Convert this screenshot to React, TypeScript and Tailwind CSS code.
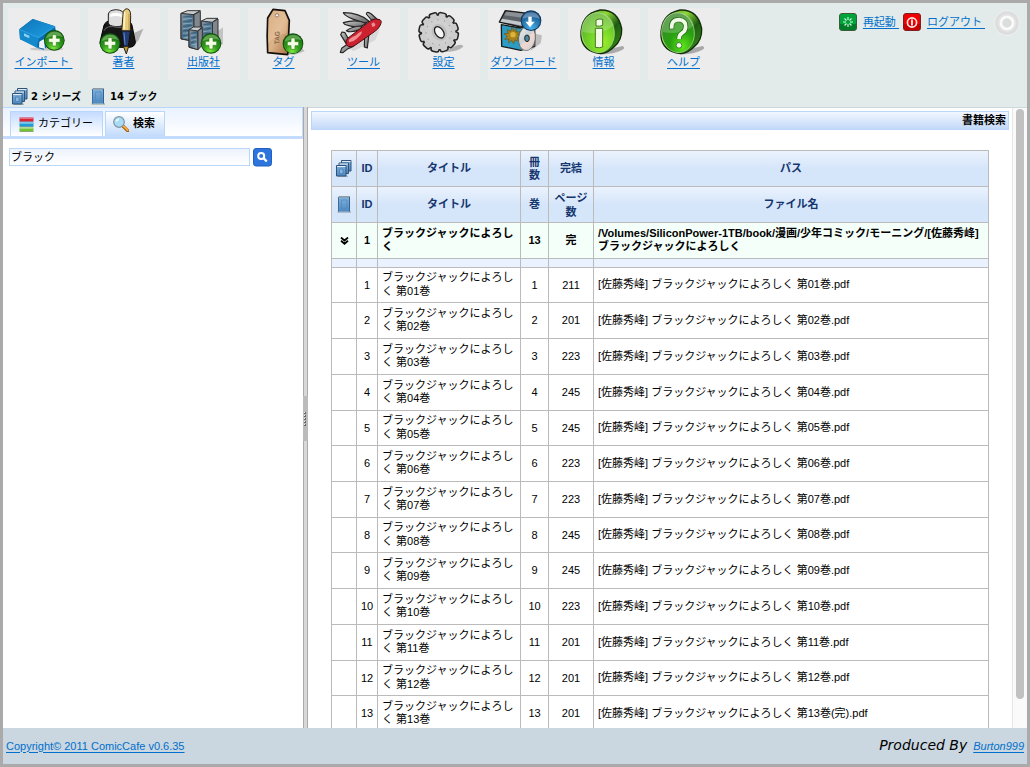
import React from "react";

type IconProps = { className?: string };

function Plus({ x, y }: { x: number; y: number }) {
  return (
    <g transform={`translate(${x} ${y})`}>
      <circle r="31" fill="#0c4a0c" />
      <circle r="28.500" fill="url(#gPlus)" />
      <path d="M-25 -6a26 24 0 0 1 50 -4c-14-6-34-4-50 4z" fill="#d8f5b8" opacity=".35" />
      <path d="M-6-17h12v11h11v12h-11v11h-12v-11h-11v-12h11z" fill="#f4fbe6" stroke="#2e8a1a" strokeWidth="2" />
    </g>
  );
}

function Defs() {
  return (
    <svg className="absolute h-0 w-0">
      <defs>
        <radialGradient id="gPlus" cx=".45" cy=".9" r=".85">
          <stop offset="0" stopColor="#7be83a" />
          <stop offset=".45" stopColor="#2f9a1c" />
          <stop offset="1" stopColor="#1a6e14" />
        </radialGradient>
        <radialGradient id="gInfo" cx=".6" cy=".75" r=".75">
          <stop offset="0" stopColor="#a0f02c" />
          <stop offset=".5" stopColor="#74d428" />
          <stop offset="1" stopColor="#5cb02a" />
        </radialGradient>
        <radialGradient id="gHelp" cx=".6" cy=".85" r=".8">
          <stop offset="0" stopColor="#5ee61a" />
          <stop offset=".5" stopColor="#28a010" />
          <stop offset="1" stopColor="#3c8a2c" />
        </radialGradient>
        <linearGradient id="gRim" x1="0" y1="0" x2="1" y2="1">
          <stop offset="0" stopColor="#2e7d16" />
          <stop offset=".35" stopColor="#8ed838" />
          <stop offset=".6" stopColor="#1d5c10" />
          <stop offset="1" stopColor="#3f9a1c" />
        </linearGradient>
        <linearGradient id="gBook" x1="0" y1="0" x2="1" y2="1">
          <stop offset="0" stopColor="#0f74b8" />
          <stop offset="1" stopColor="#1e9fe4" />
        </linearGradient>
        <linearGradient id="gTag" x1="0" y1="0" x2="1" y2="1">
          <stop offset="0" stopColor="#c89a70" />
          <stop offset=".5" stopColor="#dcb48c" />
          <stop offset="1" stopColor="#a8713e" />
        </linearGradient>
        <linearGradient id="gSteel" x1="0" y1="0" x2="1" y2="1">
          <stop offset="0" stopColor="#d0d0d0" />
          <stop offset="1" stopColor="#5c5c5c" />
        </linearGradient>
        <linearGradient id="gGlass" x1="0" y1="0" x2="1" y2="1">
          <stop offset="0" stopColor="#8a98a4" />
          <stop offset=".5" stopColor="#4c6c84" />
          <stop offset="1" stopColor="#9dbccc" />
        </linearGradient>
        <linearGradient id="gVol" x1="0" y1="0" x2="0" y2="1">
          <stop offset="0" stopColor="#7fb0dc" />
          <stop offset="1" stopColor="#4c88c0" />
        </linearGradient>
        <linearGradient id="gDisc" x1="0" y1="0" x2="1" y2="1">
          <stop offset="0" stopColor="#f4f4f4" />
          <stop offset=".45" stopColor="#c8d0d4" />
          <stop offset=".55" stopColor="#f0d8d0" />
          <stop offset="1" stopColor="#d0d0d0" />
        </linearGradient>
        <radialGradient id="gDown" cx=".5" cy=".9" r=".8">
          <stop offset="0" stopColor="#45b4ee" />
          <stop offset="1" stopColor="#174f86" />
        </radialGradient>
      </defs>
    </svg>
  );
}

const tileSvg = "block h-[48px] w-[72px] shrink-0";

function ImportIcon() {
  return (
    <svg className={tileSvg} viewBox="24 24 216 144">
      <ellipse cx="140" cy="147" rx="50" ry="5" fill="#888" opacity=".35" />
      <path d="M58 88l40-31 67 22 6 32-38 37-13-3-60-27z" fill="#0a6cac" />
      <path d="M58 88l40-31 67 22-49 36z" fill="url(#gBook)" />
      <path d="M58 88l58 26-3 31-53-28z" fill="#1489cb" />
      <path d="M118 124l14-6 3 29-18-4z" fill="#eef2f6" />
      <path d="M58 88l58 25 50-34" fill="none" stroke="#3fb2ef" strokeWidth="2" />
      <path d="M72 100l16 7v8l-16-7z" fill="#8bd2f6" />
      <path d="M124 120q-14 4-10 23l18 5" fill="none" stroke="#096cac" strokeWidth="3" />
      <Plus x={163} y={121} />
    </svg>
  );
}

function AuthorIcon() {
  return (
    <svg className={tileSvg} viewBox="264 24 216 144">
      <path d="M400 100l30-14-14 34-18 20z" fill="#777" opacity=".5" />
      <path d="M312 76q5-14 22-14h44q14 0 18 14l10 50q-1 16-20 16h-64q-23-1-22-16z" fill="#161616" stroke="#000" strokeWidth="3" />
      <path d="M325 42q2-12 24-13 22 2 22 14v28q-2 9-22 9-24-2-24-12z" fill="#dedede" stroke="#222" strokeWidth="3" />
      <path d="M331 43q14-8 34 0v8q-16-6-34 0z" fill="#fff" />
      <path d="M312 92q8-18 40-10 30 0 42 8" fill="none" stroke="#666" strokeWidth="3" />
      <path d="M370 34q7-12 17-5 5 6 5 18l-1 46h-26z" fill="#e9cb80" stroke="#2a2416" strokeWidth="3" />
      <path d="M374 36l-2 52" stroke="#fff4bc" strokeWidth="5" />
      <path d="M387 42v48" stroke="#9e7628" strokeWidth="2" />
      <path d="M365 93h26l-6 46h-14z" fill="#223c76" stroke="#111" strokeWidth="3" />
      <path d="M372 98l3 36" stroke="#6689c8" strokeWidth="3" />
      <path d="M370 139h16l-7 23z" fill="#c09a2c" stroke="#222" strokeWidth="3" />
      <Plus x={330} y={130} />
    </svg>
  );
}

function Building({ x, y, w, h }: { x: number; y: number; w: number; h: number }) {
  const s = w * 0.33;
  const rows = Array.from({ length: Math.floor((h - 22) / 7) }, (_, i) => i);
  return (
    <g transform={`translate(${x} ${y})`} stroke="#333" strokeWidth="3" strokeLinejoin="round">
      <path d={`M0 8L${s} 0H${w}L${w - s} 11V${h}L0 ${h - 7}z`} fill="#c7ccd0" />
      <path d={`M0 8L${w - s} 12V${h}L0 ${h - 8}z`} fill="url(#gGlass)" />
      <path d={`M${w - s} 12L${w} 2V${h - 14}L${w - s} ${h}z`} fill="#80888e" />
      {rows.map((i) => (
        <path key={i} d={`M6 ${19 + i * 7}L${w - s - 5} ${16 + i * 7}`} stroke={i % 2 ? "#86b4d0" : "#2f5a7c"} strokeWidth="2.500" />
      ))}
    </g>
  );
}

function PublisherIcon() {
  return (
    <svg className={tileSvg} viewBox="504 24 216 144">
      <path d="M645 100l24-18v50l-24 14z" fill="#888" opacity=".4" />
      <Building x={543} y={32} w={58} h={92} />
      <Building x={604} y={55} w={50} h={80} />
      <Building x={567} y={81} w={40} h={68} />
      <Plus x={633} y={130} />
    </svg>
  );
}

function TagIcon() {
  return (
    <svg className={tileSvg} viewBox="24 24 216 144">
      <path d="M150 150l34-8 10 12-30 10-70-2z" fill="#777" opacity=".4" />
      <path d="M99 28l36 4 13 29-5 103-60-6q-3-50 0-104z" fill="url(#gTag)" stroke="#14100c" strokeWidth="5" strokeLinejoin="round" />
      <path d="M101 32l31 4 11 26-4 38q-30 4-54 30 0-40 1-72z" fill="#ecc9a4" opacity=".45" />
      <circle cx="111" cy="46" r="5" fill="#f5f5f5" stroke="#77583c" strokeWidth="2" />
      <text transform="translate(118 133) rotate(-88)" fontFamily="Liberation Sans" fontSize="21" fontWeight="bold" fill="#8a684a" textLength="39" lengthAdjust="spacingAndGlyphs">TAG</text>
      <Plus x={159} y={131} />
    </svg>
  );
}

function ToolIcon() {
  return (
    <svg className={tileSvg} viewBox="264 24 216 144">
      <path d="M330 146l90-60-14 34-66 34z" fill="#888" opacity=".2" />
      <g fill="url(#gSteel)" stroke="#242424" strokeWidth="3.500" strokeLinejoin="round">
        <path d="M394 60l-15-18q2-10 15 0l18 16z" />
        <path d="M388 64q-30-26-78-26 2 12 64 32z" />
        <path d="M378 70q-30-14-68-2 4 10 50 14z" />
        <path d="M366 78q-28 0-47 14 12 8 42-3z" />
        <path d="M325 116l-10-18-9-2-4 8 16 26z" />
        <path d="M326 130l-21 15-4 12 8 1 12-10 20-9z" />
        <path d="M374 108l-1 33 9 3 5-44z" />
      </g>
      <path d="M318 123q4-10 14-15l60-46q14-9 28-3 7 5 0 18-5 11-18 19l-54 38q-12 9-23 6-8-4-7-17z" fill="#cc2230" stroke="#4a1014" strokeWidth="3" />
      <path d="M326 121q4-8 20-14 12-10 20-13 0 10-16 22-10 10-22 11z" fill="#fbb4b4" opacity=".75" />
      <path d="M394 72l6-5 6 5-1 6-8 3z" fill="#fff" opacity=".5" />
    </svg>
  );
}

function GearIcon() {
  const teeth = Array.from({ length: 12 }, (_, i) => i * 30);
  return (
    <svg className={tileSvg} viewBox="504 24 216 144">
      <path d="M646 138q22-8 24 2-16 14-54 16z" fill="#777" opacity=".5" />
      <g transform="translate(596 97) rotate(12)">
        {teeth.map((a) => (
          <rect key={a} x="-11" y="-58" width="22" height="18" rx="6" fill="#c6c6c6" stroke="#222" strokeWidth="7" transform={`rotate(${a})`} />
        ))}
        <circle r="50" fill="#d0d0d0" />
        {teeth.map((a) => (
          <rect key={a} x="-10" y="-57" width="20" height="18" rx="5" fill="#cdcdcd" transform={`rotate(${a})`} />
        ))}
        {teeth.map((a) => (
          <circle key={a} cx="0" cy="-38" r="2" fill="#9a9a9a" transform={`rotate(${a + 15})`} />
        ))}
      </g>
      <ellipse cx="598" cy="97" rx="22" ry="26" fill="#c0c0c0" transform="rotate(-35 598 97)" />
      <ellipse cx="598" cy="97" rx="12" ry="19" fill="#f5f5f5" stroke="#222" strokeWidth="4" transform="rotate(-35 598 97)" />
    </svg>
  );
}

function DownloadIcon() {
  return (
    <svg className={tileSvg} viewBox="24 24 216 144">
      <path d="M160 100l26 6-4 24-30 22z" fill="#777" opacity=".4" />
      <path d="M64 74l58 10 42-9v64l-42 12-57-12z" fill="#2c9cc4" stroke="#1a1a1a" strokeWidth="4" strokeLinejoin="round" />
      <path d="M122 84v66l42-12V75z" fill="#6f7476" />
      <path d="M58 66l18-34 68 8-18 42z" fill="#5c6267" stroke="#1a1a1a" strokeWidth="4" strokeLinejoin="round" />
      <path d="M79 35l60 7-8 12-58-8z" fill="#8a9096" />
      <path d="M61 65l64 12 4-10-63-11z" fill="#c4c9cc" />
      <path d="M96 81l5 11 9-7-2 11 13-1-8 9 11 7-12 2 4 12-11-6-4 12-6-10-9 8 1-12-13 1 8-9-10-8 13-1-4-11 11 5z" fill="#a7821e" stroke="#6e5210" strokeWidth="2" />
      <circle cx="99" cy="104" r="8" fill="#dcb437" />
      <ellipse cx="141" cy="115" rx="25" ry="37" fill="url(#gDisc)" stroke="#555" strokeWidth="2" transform="rotate(8 141 115)" />
      <ellipse cx="141" cy="115" rx="7" ry="10" fill="#4a8aa0" stroke="#222" strokeWidth="3" />
      <circle cx="153" cy="62" r="31" fill="#12375e" />
      <circle cx="153" cy="62" r="28" fill="url(#gDown)" />
      <path d="M127 56a27 26 0 0 1 52 0q-24-10-52 0z" fill="#fff" opacity=".3" />
      <path d="M145 50h10v15h9l-14 17-14-17h9z" fill="#fff" />
    </svg>
  );
}

function Badge({ fill, children }: { fill: string; children: React.ReactNode }) {
  return (
    <svg className={tileSvg} viewBox="264 24 216 144">
      <path d="M392 146l36-8q10 6-2 12-22 12-66 14z" fill="#666" opacity=".5" />
      <path d="M360 30q54-2 65 56 2 34-24 56-18 18-40 19-54-8-58-52-3-66 57-79z" fill="url(#gRim)" stroke="#142c0c" strokeWidth="4" />
      <ellipse cx="354" cy="98" rx="49" ry="60" fill={fill} stroke="#b8e492" strokeWidth="2" transform="rotate(-5 354 98)" />
      <path d="M308 96q-4-50 40-58 42 0 54 38-36 32-94 20z" fill="#fff" opacity=".2" />
      {children}
    </svg>
  );
}

function InfoIcon() {
  return (
    <Badge fill="url(#gInfo)">
      <path d="M348 60q8-5 20-2v18q-8 4-20 2zM346 85h22v56q-9 4-22 1z" fill="#f1fbe3" stroke="#427922" strokeWidth="3" />
    </Badge>
  );
}

function HelpIcon() {
  return (
    <Badge fill="url(#gHelp)">
      <path d="M335 88q-3-30 22-29 22 3 20 22 0 12-12 19-8 5-8 17" fill="none" stroke="#2b6c20" strokeWidth="16" />
      <path d="M335 86q-2-27 22-27 22 3 20 22 0 12-12 19-8 5-8 17" fill="none" stroke="#effbe4" strokeWidth="11" />
      <circle cx="357" cy="136" r="8.500" fill="#effbe4" stroke="#2b6c20" strokeWidth="2.500" />
    </Badge>
  );
}

function VolumeIcon({ className }: IconProps) {
  return (
    <svg className={className} viewBox="0 0 16 17">
      <path d="M1.500 16h13.500" stroke="#6b7278" strokeOpacity=".7" />
      <path d="M2 1.500l1-1h10.500v1z" fill="#e8eef2" stroke="#56646f" strokeWidth=".6" />
      <path d="M2 1.500h11.500v14H2z" fill="url(#gVol)" />
      <path d="M2.500 1.500v14" stroke="#3b6c9c" />
      <path d="M13.500 1v14.500" stroke="#33608e" />
      <path d="M5.500 4h5.500v8.500H5.500z" fill="none" stroke="#5288bc" strokeWidth=".7" />
    </svg>
  );
}

function SeriesIcon({ className }: IconProps) {
  return (
    <svg className={className} viewBox="0 0 16 17">
      <path d="M2 16.300h10" stroke="#6b7278" strokeOpacity=".6" />
      {[
        [5.5, 0.5],
        [3, 3],
        [0.5, 5.5],
      ].map(([x, y]) => (
        <g key={x} transform={`translate(${x} ${y})`}>
          <path d="M0 0h9.500v10.500H0z" fill="url(#gVol)" stroke="#2f5378" />
          <path d="M.5 1h8.500" stroke="#e2ebf2" />
        </g>
      ))}
      <path d="M3.500 9h3.500v4.500h-3.500z" fill="#8ab6de" stroke="#4379ae" strokeWidth=".7" />
    </svg>
  );
}

const link = "text-[#0070cc] underline decoration-1 underline-offset-2 whitespace-pre";

const tiles = [
  { label: "インポート ", icon: <ImportIcon /> },
  { label: "著者", icon: <AuthorIcon /> },
  { label: "出版社", icon: <PublisherIcon /> },
  { label: "タグ", icon: <TagIcon /> },
  { label: "ツール", icon: <ToolIcon /> },
  { label: "設定", icon: <GearIcon /> },
  { label: "ダウンロード", icon: <DownloadIcon /> },
  { label: "情報", icon: <InfoIcon /> },
  { label: "ヘルプ", icon: <HelpIcon /> },
];

function Header() {
  return (
    <header className="flex h-[104px] shrink-0 flex-col bg-[#e2ebe9]">
      <div className="flex h-[77px] justify-between pt-[5px] pl-[5px]">
        <nav className="flex gap-2">
          {tiles.map((t) => (
            <div key={t.label} className="flex h-[72px] w-[72px] flex-col items-center bg-[#ececec]">
              {t.icon}
              <a className={`${link} mt-[-1px] mr-px leading-[14px]`}>{t.label}</a>
            </div>
          ))}
        </nav>
        <div className="flex h-7 items-center pr-[7px]">
          <svg className="h-[18px] w-[18px]" viewBox="0 0 18 18">
            <rect x=".5" y=".5" width="17" height="17" rx="2.500" fill="#00a23a" stroke="#3c5a3c" />
            <path d="M1 11h16v4q0 2-2 2H3q-2 0-2-2z" fill="#007c28" />
            <path d="M9 4v3M9 11v3M4 9h3M11 9h3M5.500 5.500l2 2M10.500 10.500l2 2M12.500 5.500l-2 2M5.500 12.500l2-2" stroke="#d9ffe0" strokeWidth="1.100" />
          </svg>
          <a className={`${link} ml-[6px]`}>{"再起動 "}</a>
          <svg className="ml-[4px] h-[18px] w-[18px]" viewBox="0 0 18 18">
            <rect x=".5" y=".5" width="17" height="17" rx="2.500" fill="#ee0000" stroke="#7a2020" />
            <path d="M1 11h16v4q0 2-2 2H3q-2 0-2-2z" fill="#c40000" />
            <circle cx="9" cy="9.500" r="4.600" fill="none" stroke="#ffe4e4" strokeWidth="1.700" />
            <path d="M9 6.500v6" stroke="#fff" strokeWidth="1.700" />
          </svg>
          <a className={`${link} ml-[6px]`}>{"ログアウト "}</a>
          <svg className="mt-[2px] ml-[9px] h-[26px] w-[26px]" viewBox="0 0 26 26">
            <circle cx="13" cy="13" r="12.500" fill="#dcdddd" stroke="#f0f0f0" />
            <circle cx="13" cy="13" r="9" fill="#e6e6e6" />
            <circle cx="13" cy="13" r="6" fill="#dcdddd" stroke="#fbfbfb" strokeWidth="2.500" />
          </svg>
        </div>
      </div>
      <div className="flex h-[26px] items-center pt-[7px] pl-[9px] font-['DejaVu_Sans','Noto_Sans_CJK_JP',sans-serif] text-[10px] font-bold">
        <SeriesIcon className="h-[17px] w-4" />
        <span className="ml-[3px] w-[59px] whitespace-nowrap">2 シリーズ</span>
        <VolumeIcon className="h-[17px] w-4" />
        <span className="ml-1 whitespace-nowrap">14 ブック</span>
      </div>
    </header>
  );
}

function Sidebar() {
  return (
    <aside className="flex w-[300px] shrink-0 flex-col border-t border-[#bbd6fb] bg-white">
      <div className="flex h-[31px] gap-[2px] border-r border-b-[3px] border-[#c3dbfc] bg-gradient-to-b from-[#e9f2ff] to-white pt-[3px] pl-[7px]">
        <div className="flex h-[25px] w-[93px] items-center border border-b-0 border-[#bbd6fb] bg-gradient-to-b from-[#c5dcff] to-white pl-[8px]">
          <svg className="h-[15px] w-[15px]" viewBox="0 0 15 15">
            <path d="M.5.500h14v4H.5z" fill="#d8243a" />
            <path d="M.5 5.500h14v4H.5z" fill="#1d9cd6" />
            <path d="M.5 10.500h14v4H.5z" fill="#72c434" />
            <path d="M1 1.500h13M1 6.500h13M1 11.500h13" stroke="#fff" strokeOpacity=".35" />
            <path d="M.5 4.500h14M.5 9.500h14M.5 14.500h14" stroke="#333" strokeOpacity=".4" strokeWidth=".8" />
          </svg>
          <span className="mt-[-2px] ml-[4px] whitespace-nowrap">カテゴリー</span>
        </div>
        <div className="flex h-[25px] w-[60px] items-center border border-b-0 border-[#bbd6fb] bg-gradient-to-b from-white to-[#c3dbfc] pl-[7px]">
          <svg className="h-4 w-4 shrink-0" viewBox="0 0 16 16">
            <path d="M10 10l5 5" stroke="#a35c10" strokeWidth="3.200" strokeLinecap="round" />
            <path d="M10.500 10l4.200 4.200" stroke="#f5ad3c" strokeWidth="1.800" strokeLinecap="round" />
            <circle cx="6" cy="6" r="5.300" fill="#a8dcf5" stroke="#8196a8" strokeWidth="1.200" />
            <path d="M2.500 6a3.500 3.500 0 0 1 4-3.500q-1 3-4 3.500z" fill="#fff" opacity=".8" />
          </svg>
          <span className="mt-[-2px] ml-1 font-bold whitespace-nowrap">検索</span>
        </div>
      </div>
      <div className="flex gap-[3px] pt-[9px] pl-[6px]">
        <div className="flex h-[18px] w-[241px] items-center border border-[#bbd6fb] bg-gradient-to-b from-[#edf3fc] to-white pl-px">ブラック</div>
        <svg className="h-[19px] w-[19px]" viewBox="0 0 19 19">
          <rect x=".5" y=".5" width="18" height="17.500" rx="2.500" fill="#2d74dc" stroke="#2060c4" />
          <circle cx="8.200" cy="8" r="3" fill="none" stroke="#fff" strokeWidth="2" />
          <path d="M10.500 10.200l3.300 3.300" stroke="#fff" strokeWidth="2.400" />
        </svg>
      </div>
    </aside>
  );
}

function Splitter() {
  return (
    <div className="flex w-[5px] shrink-0 flex-col border-x border-[#aaa] bg-[#d8d8d8] pt-[289px]">
      <div className="mx-[-1px] flex h-[45px] flex-col items-center justify-center gap-[1px] bg-[#bbb]">
        {[0, 1, 2, 3, 4].map((i) => (
          <svg key={i} className="h-[2px] w-[3px]" viewBox="0 0 3 2" shapeRendering="crispEdges">
            <path d="M0 1h2v1H0zM1 0h1v1H1z" fill="#666" />
            <path d="M0 0h1v1H0z" fill="#eee" />
          </svg>
        ))}
      </div>
    </div>
  );
}

const cols = "grid grid-cols-[25px_21px_143px_28px_45px_395px]";
const cell = "flex items-center justify-center border-r border-b border-[#bbb] text-center";
const head = `${cell} font-bold text-[#15356e]`;
const headRow = `${cols} h-9 bg-gradient-to-b from-[#ebf3fd] via-[#d5e5fa] to-[#d5e5fa]`;
const textCell = "flex items-center border-r border-b border-[#bbb] pl-1 pb-px whitespace-nowrap";

const books = [
  { pages: 211, h: "h-[35px]" },
  { pages: 201, h: "h-[36px]" },
  { pages: 223, h: "h-[36px]" },
  { pages: 245, h: "h-[36px]" },
  { pages: 245, h: "h-[35px]" },
  { pages: 223, h: "h-[36px]" },
  { pages: 223, h: "h-[36px]" },
  { pages: 245, h: "h-[35px]" },
  { pages: 245, h: "h-[36px]" },
  { pages: 223, h: "h-[36px]" },
  { pages: 201, h: "h-[36px]" },
  { pages: 201, h: "h-[35px]" },
  { pages: 201, h: "h-[36px]" },
];

function BookTable() {
  return (
    <div className="ml-[23px] w-[658px] border-t border-l border-[#bbb]">
      <div className={headRow}>
        <div className={cell}><SeriesIcon className="h-[17px] w-4" /></div>
        <div className={head}>ID</div>
        <div className={head}>タイトル</div>
        <div className={head}>冊<br />数</div>
        <div className={head}>完結</div>
        <div className={head}>パス</div>
      </div>
      <div className={headRow}>
        <div className={cell}><VolumeIcon className="h-[17px] w-4" /></div>
        <div className={head}>ID</div>
        <div className={head}>タイトル</div>
        <div className={head}>巻</div>
        <div className={`${head} leading-[14px]`}>ページ<br />数</div>
        <div className={head}>ファイル名</div>
      </div>
      <div className={`${cols} h-9 bg-[#f4fff9] font-bold`}>
        <div className={cell}>
          <svg className="h-2 w-[9px]" viewBox="0 0 9 8">
            <path d="M1 .5l3.500 3 3.500-3M1 3.700l3.500 3L8 3.700" fill="none" stroke="#000" strokeWidth="1.800" />
          </svg>
        </div>
        <div className={cell}>1</div>
        <div className={textCell}>ブラックジャックによろし<br />く</div>
        <div className={cell}>13</div>
        <div className={cell}>完</div>
        <div className={textCell}>
          /Volumes/SiliconPower-1TB/book/漫画/少年コミック/モーニング/[佐藤秀峰]<br />ブラックジャックによろしく
        </div>
      </div>
      <div className={`${cols} h-[9px] bg-[#e9f2fe]`}>
        {[0, 1, 2, 3, 4, 5].map((i) => <div key={i} className={cell} />)}
      </div>
      {books.map((b, i) => {
        const n = i + 1;
        const vol = String(n).padStart(2, "0");
        return (
          <div key={n} className={`${cols} ${b.h}`}>
            <div className={cell} />
            <div className={cell}>{n}</div>
            <div className={`${textCell} leading-[13.5px]`}>
              ブラックジャックによろし<br />く 第{vol}巻
            </div>
            <div className={cell}>{n}</div>
            <div className={cell}>{b.pages}</div>
            <div className={textCell}>
              [佐藤秀峰] ブラックジャックによろしく 第{vol}巻{n === 13 ? "(完)" : ""}.pdf
            </div>
          </div>
        );
      })}
    </div>
  );
}

export default function App() {
  return (
    <div className="flex h-[767px] w-[1030px] flex-col overflow-hidden border-[3px] border-[#aaa] bg-white font-['Liberation_Sans','Noto_Sans_CJK_JP',sans-serif] text-[11px] leading-[13px] text-black">
      <Defs />
      <Header />
      <div className="flex h-[621px] shrink-0 overflow-hidden">
        <Sidebar />
        <Splitter />
        <main className="flex min-w-0 flex-1 overflow-hidden border-t border-[#ccd6dc]">
          <div className="w-[704px] shrink-0">
            <div className="mt-[3px] mb-5 ml-[3px] flex h-[19px] w-[698px] items-center justify-end border border-[#bbd6fb] bg-gradient-to-b from-[#f2f7fe] to-[#c3d9f9] pr-[2px] font-bold">
              書籍検索
            </div>
            <BookTable />
          </div>
          <div className="flex w-[15px] shrink-0 flex-col items-center border-l border-[#e6e6e6] bg-[#fafafa] pt-px">
            <div className="h-[590px] w-2 rounded-full bg-[#c1c1c1]" />
          </div>
        </main>
      </div>
      <footer className="flex h-9 shrink-0 items-center justify-between bg-[#cad6e0] px-[3px]">
        <a className={link}>Copyright© 2011 ComicCafe v0.6.35</a>
        <div className="flex items-baseline gap-[6px] italic">
          <span className="font-['DejaVu_Sans',sans-serif] text-[14px]">Produced By</span>
          <a className={link}>Burton999</a>
        </div>
      </footer>
    </div>
  );
}
